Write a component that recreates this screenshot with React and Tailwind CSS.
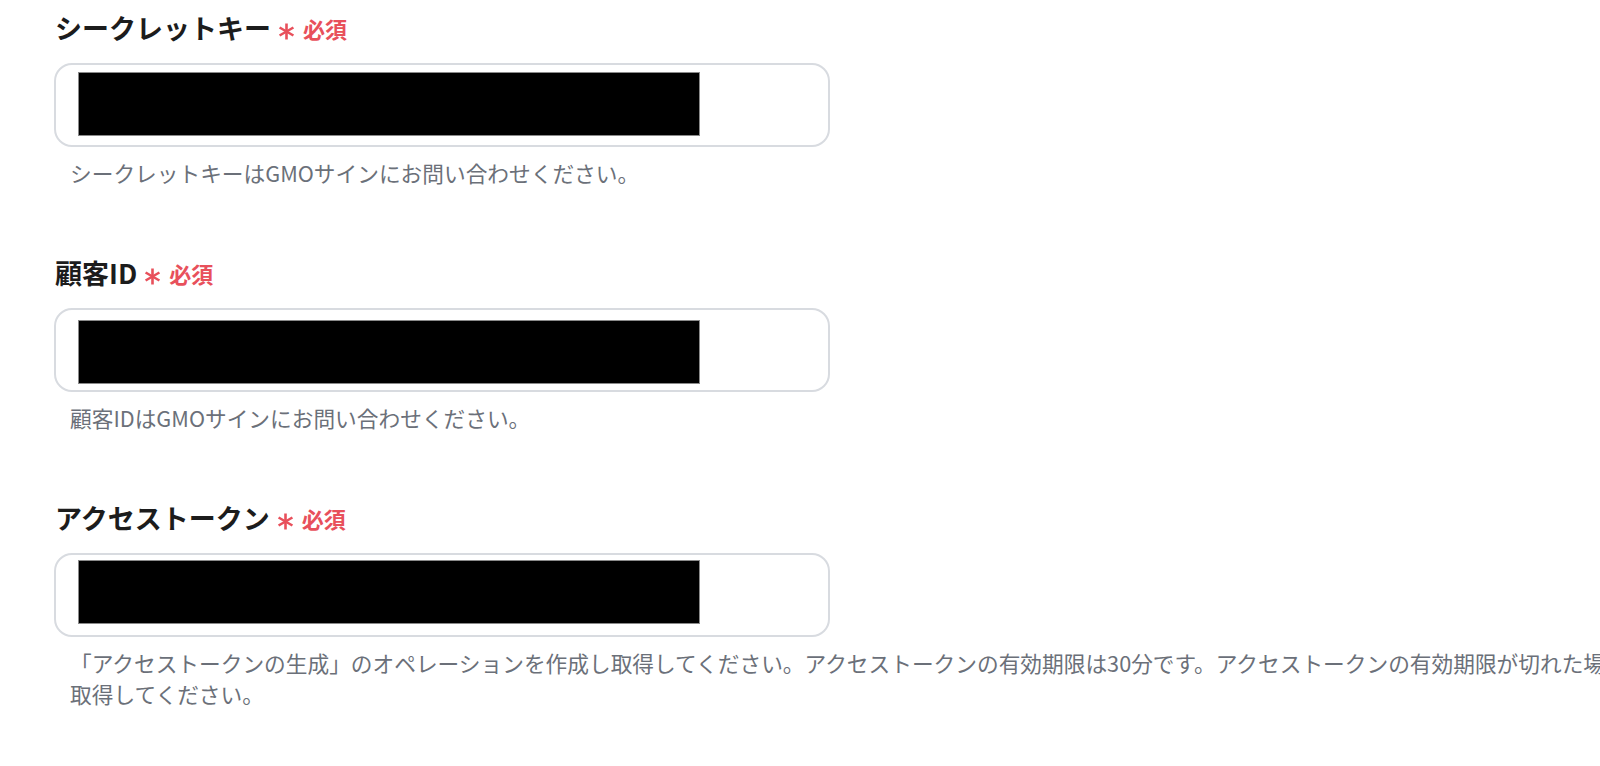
import React from "react";

const FONT = { fontFamily: '"Noto Sans CJK JP", "Noto Sans", sans-serif' };

function Asterisk() {
  return (
    <svg width="17" height="17" viewBox="0 0 17 17" className="ml-[7px] mt-[6px] shrink-0" aria-hidden="true">
      <g stroke="#e8505b" strokeWidth="2.6" strokeLinecap="butt">
        <line x1="8.5" y1="0.5" x2="8.5" y2="16.5" />
        <line x1="1.6" y1="4.5" x2="15.4" y2="12.5" />
        <line x1="1.6" y1="12.5" x2="15.4" y2="4.5" />
      </g>
    </svg>
  );
}

function Field({ label, lines, blackTop }) {
  return (
    <div className="flex flex-col">
      <div className="flex items-center h-[36px] pl-[1px]">
        <span className="text-[27px] font-bold text-[#1c1c1c] leading-[36px]">{label}</span>
        <Asterisk />
        <span className="ml-[8px] text-[22px] font-bold text-[#e8505b] leading-[36px]">必須</span>
      </div>
      <div className="mt-[17px] w-[776px] h-[84px] rounded-[18px] border-2 border-[#d8dbe0] bg-white pl-[22px]" style={{ paddingTop: blackTop }}>
        <div className="w-[622px] h-[64px] bg-black border border-[#8a8a8a]" />
      </div>
      <div className="mt-[10px] pl-[16px] text-[21.7px] leading-[31px] text-[#6b7079]">
        {lines.map((l, i) => (
          <div key={i} className="whitespace-nowrap">{l}</div>
        ))}
      </div>
    </div>
  );
}

export default function App() {
  return (
    <div className="w-[1600px] h-[766px] overflow-hidden bg-white" style={FONT}>
      <div className="flex flex-col gap-[67px] pt-[10px] pl-[54px]">
        <Field
          label="シークレットキー"
          blackTop={7}
          lines={["シークレットキーはGMOサインにお問い合わせください。"]}
        />
        <Field
          label="顧客ID"
          blackTop={10}
          lines={["顧客IDはGMOサインにお問い合わせください。"]}
        />
        <Field
          label="アクセストークン"
          blackTop={5}
          lines={[
            "「アクセストークンの生成」のオペレーションを作成し取得してください。アクセストークンの有効期限は30分です。アクセストークンの有効期限が切れた場合は、再度「アクセストークンの生成」のオペレーションから",
            "取得してください。",
          ]}
        />
      </div>
    </div>
  );
}
